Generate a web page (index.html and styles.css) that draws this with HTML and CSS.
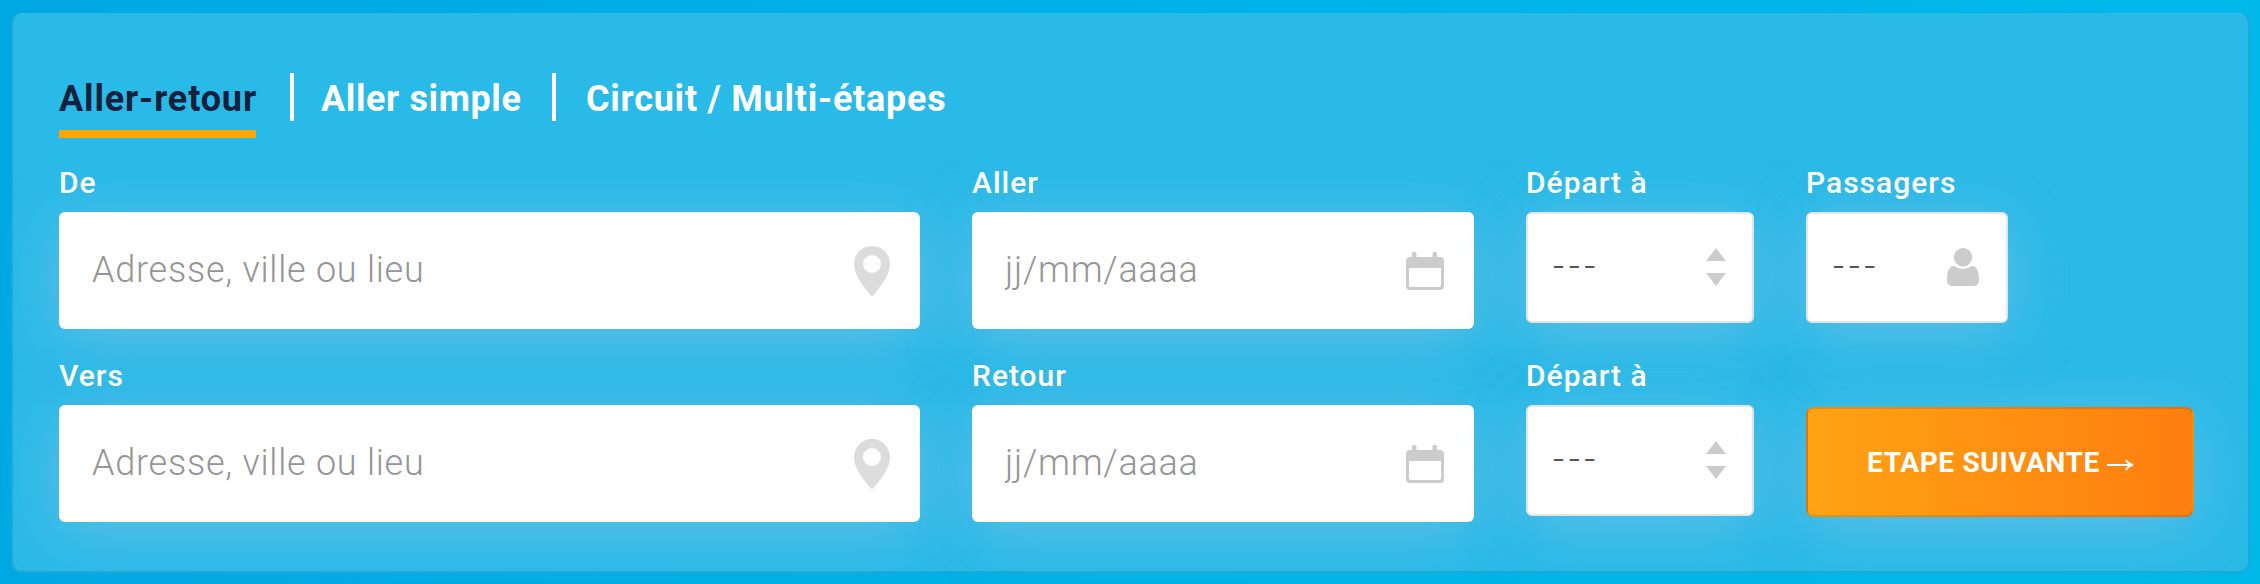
FILE: index.html
```
<!DOCTYPE html>
<html lang="fr">
<head>
  <meta charset="UTF-8">
  <title>Réservation</title>
  <link rel="stylesheet" href="styles.css">
</head>
<body>
  <form class="booking">
    <nav class="tabs">
      <a class="tab active">Aller-retour</a>
      <a class="tab tab-simple">Aller simple</a>
      <a class="tab tab-multi">Circuit / Multi-étapes</a>
    </nav>
    <div class="fields">
      <div class="field">
        <label for="from">De</label>
        <div class="control">
          <input type="text" id="from" placeholder="Adresse, ville ou lieu">
          <svg class="icon pin" viewBox="0 0 36 50"><path fill-rule="evenodd" d="M18 0C8 0 0 8 0 18c0 11 9 22 16.500 31q1.500 2 3 0C27 40 36 29 36 18 36 8 28 0 18 0zm0 9a9 9 0 1 1 0 18 9 9 0 0 1 0-18z"/></svg>
        </div>
      </div>
      <div class="field">
        <label for="go">Aller</label>
        <div class="control">
          <input type="text" id="go" class="date" placeholder="jj/mm/aaaa">
          <svg class="icon calendar" viewBox="0 0 38 38"><path fill-rule="evenodd" d="M6 5V2a2 2 0 0 1 4.500 0v3h16V2A2 2 0 0 1 31 2v3h3q4 0 4 4v25q0 4-4 4H4q-4 0-4-4V9q0-4 4-4zM3 16v17q0 2 2 2h28q2 0 2-2V16z"/></svg>
        </div>
      </div>
      <div class="field">
        <label for="goTime">Départ à</label>
        <div class="control small">
          <select id="goTime"><option>---</option></select>
          <svg class="icon arrows" viewBox="0 0 20 38"><path d="M10 0l10 13H0zM0 25h20L10 38z"/></svg>
        </div>
      </div>
      <div class="field">
        <label for="passengers">Passagers</label>
        <div class="control small passengers">
          <select id="passengers"><option>---</option></select>
          <svg class="icon person" viewBox="0 0 32 38"><circle cx="16" cy="9.200" r="9.200"/><path d="M7 18q9 6 18 0c5 0 7 6 7 14 0 4-2 6-6 6H6c-4 0-6-2-6-6 0-8 2-14 7-14z"/></svg>
        </div>
      </div>
      <div class="field">
        <label for="to">Vers</label>
        <div class="control">
          <input type="text" id="to" placeholder="Adresse, ville ou lieu">
          <svg class="icon pin" viewBox="0 0 36 50"><path fill-rule="evenodd" d="M18 0C8 0 0 8 0 18c0 11 9 22 16.500 31q1.500 2 3 0C27 40 36 29 36 18 36 8 28 0 18 0zm0 9a9 9 0 1 1 0 18 9 9 0 0 1 0-18z"/></svg>
        </div>
      </div>
      <div class="field">
        <label for="back">Retour</label>
        <div class="control">
          <input type="text" id="back" class="date" placeholder="jj/mm/aaaa">
          <svg class="icon calendar" viewBox="0 0 38 38"><path fill-rule="evenodd" d="M6 5V2a2 2 0 0 1 4.500 0v3h16V2A2 2 0 0 1 31 2v3h3q4 0 4 4v25q0 4-4 4H4q-4 0-4-4V9q0-4 4-4zM3 16v17q0 2 2 2h28q2 0 2-2V16z"/></svg>
        </div>
      </div>
      <div class="field">
        <label for="backTime">Départ à</label>
        <div class="control small">
          <select id="backTime"><option>---</option></select>
          <svg class="icon arrows" viewBox="0 0 20 38"><path d="M10 0l10 13H0zM0 25h20L10 38z"/></svg>
        </div>
      </div>
      <div class="field submit">
        <button type="button" class="next">
          <span>ETAPE SUIVANTE</span>
          <svg class="next-arrow" viewBox="0 0 27 12"><path d="M0 6h25M19 1q2 4 7 5-5 1-7 5"/></svg>
        </button>
      </div>
    </div>
  </form>
</body>
</html>
```
FILE: styles.css
```
* {
  box-sizing: border-box;
}
body {
  margin: 0;
  height: 584px;
  padding: 13px 10px 11px 11px;
  font-family: Roboto, "Liberation Sans", sans-serif;
  background: linear-gradient(100deg, #00a8e2 0%, #00b4e8 60%, #00b9e9 100%);
  overflow: hidden;
}
.booking {
  height: 560px;
  padding: 0 46px;
  background: #2abae8;
  background-clip: padding-box;
  border: 2px solid #20a8d5;
  border-top: 0;
  border-radius: 10px;
}

.tabs {
  display: flex;
  align-items: flex-start;
  height: 147px;
  padding-top: 60px;
}
.tab {
  height: 48px;
  line-height: 53px;
  font-size: 36px;
  font-weight: 700;
  letter-spacing: 0.75px;
  color: #fff;
  white-space: nowrap;
}
.tab.active {
  width: 197px;
  height: 65px;
  margin-right: 34px;
  letter-spacing: 0.85px;
  color: #14213d;
  border-bottom: 8px solid #ffa500;
}
.tab-simple {
  width: 262px;
  padding-left: 27px;
  letter-spacing: 0.6px;
  border-left: 4px solid #fff;
}
.tab-multi {
  padding-left: 30px;
  border-left: 4px solid #fff;
}

.fields {
  display: grid;
  grid-template-columns: 861px 502px 228px 388px;
  column-gap: 52px;
  row-gap: 24px;
}
.field {
  height: 169px;
}
.field label {
  display: block;
  height: 52px;
  line-height: 46px;
  font-size: 30px;
  font-weight: 500;
  letter-spacing: 1px;
  color: #fff;
}
.control {
  display: flex;
  align-items: center;
  height: 117px;
  padding: 0 30px 0 33px;
  background: #fff;
  border-radius: 6px;
  box-shadow: 0 10px 60px rgba(150, 195, 230, 0.5);
}
.control.small {
  height: 111px;
  padding: 0 26px 2px 25px;
  border: 2px solid #e5e5e5;
}
.control.passengers {
  width: 202px;
  padding-right: 27px;
}
input,
select {
  flex: 1;
  min-width: 0;
  padding: 0 0 2px;
  border: 0;
  outline: 0;
  background: none;
  appearance: none;
  font: 300 36px Roboto, "Liberation Sans", sans-serif;
  letter-spacing: 0.75px;
  color: #555;
}
input::placeholder {
  color: #959595;
  opacity: 1;
}
select {
  font-size: 39px;
  letter-spacing: 4.5px;
}

.icon {
  flex: none;
  fill: #ccc;
}
.pin {
  width: 36px;
  height: 50px;
  fill: #dcdcdc;
}
.calendar {
  width: 38px;
  height: 38px;
}
.arrows {
  width: 20px;
  height: 38px;
}
.person {
  width: 32px;
  height: 38px;
}

.submit {
  padding-top: 54px;
}
.next {
  display: flex;
  align-items: center;
  width: 388px;
  height: 110px;
  padding: 0 0 0 59px;
  border: 2px solid rgba(0, 0, 0, 0.1);
  border-radius: 8px;
  background: linear-gradient(90deg, #ffa313, #ff7e10);
  box-shadow: 0 10px 60px rgba(150, 195, 230, 0.5);
  font: 700 28px Roboto, "Liberation Sans", sans-serif;
  letter-spacing: 0.65px;
  color: #fff;
  white-space: nowrap;
}
.next-arrow {
  width: 27px;
  height: 12px;
  margin: 5px 0 0 7px;
  fill: none;
  stroke: #fff;
  stroke-width: 2;
}
```
